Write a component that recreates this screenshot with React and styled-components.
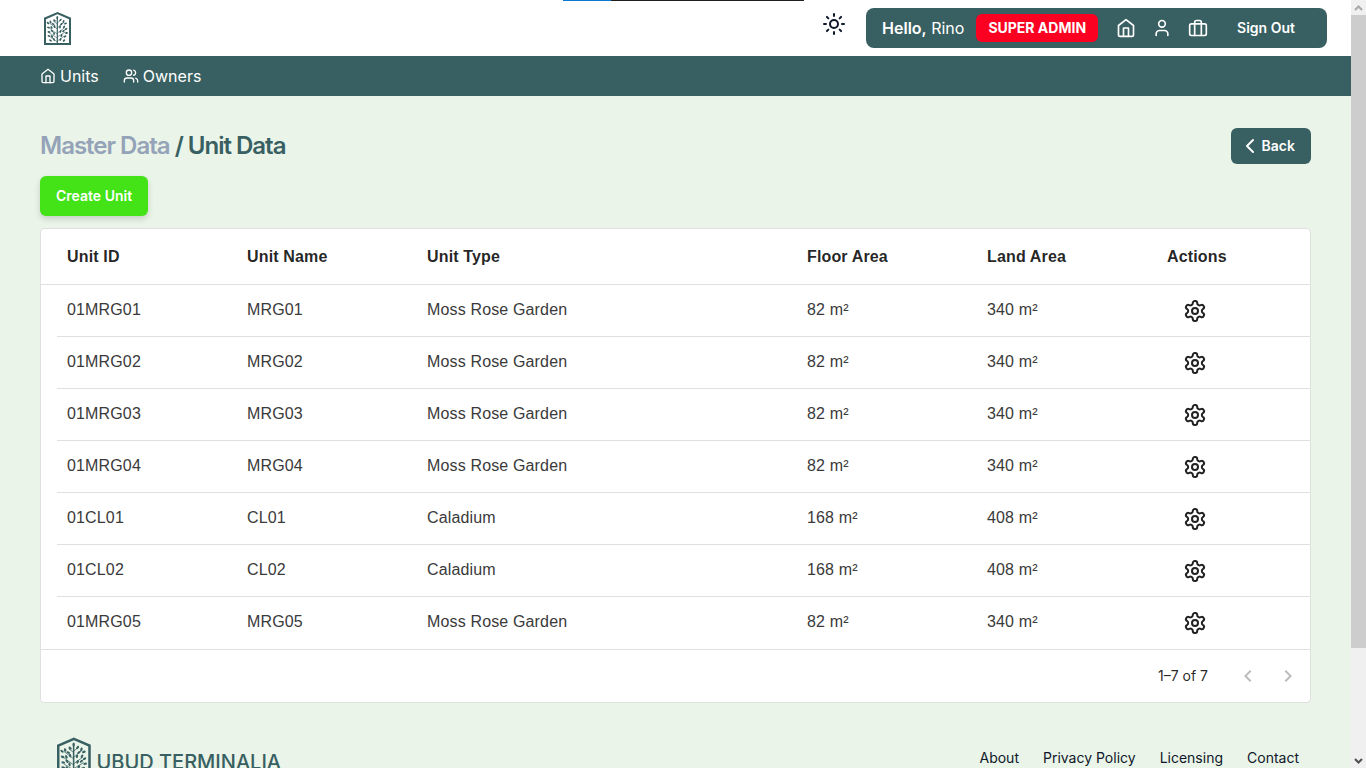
import React from "react";
import styled, { createGlobalStyle } from "styled-components";
import { Sun, ChevronLeft } from "lucide-react";

const teal = "#385f61";
const mint = "#eaf4e8";

const GlobalStyle = createGlobalStyle`
  * { box-sizing: border-box; }
  html, body { height: 100%; }
  body { margin: 0; background: ${mint}; color: #0f172a; font-family: Inter, "Liberation Sans", sans-serif; overflow: hidden; }
  #root { height: 100%; }
  button { font: inherit; color: inherit; background: none; border: 0; padding: 0; cursor: pointer; }
  a { color: inherit; text-decoration: none; }
  h1 { margin: 0; }
  svg { display: block; flex: none; }
`;

const Window = styled.div`
  position: relative;
  display: flex;
  height: 100vh;
  overflow: hidden;
`;
const Page = styled.div`
  flex: 1;
  min-width: 0;
  overflow: hidden;
`;
const TabStrip = styled.div`
  position: absolute;
  top: 0;
  left: 50%;
  margin-left: -120px;
  width: 241px;
  height: 1px;
  background: linear-gradient(to right, #0b78d0 20%, #202020 20%);
`;

const TopBar = styled.header`
  display: flex;
  align-items: center;
  justify-content: space-between;
  height: 56px;
  padding: 0 24px 0 40px;
  background: #fff;
`;
const TopRight = styled.div`
  display: flex;
  align-items: center;
  gap: 20px;
`;
const ThemeButton = styled.button`
  color: #0f172a;
  padding-bottom: 8px;
`;
const UserPanel = styled.div`
  display: flex;
  align-items: center;
  height: 40px;
  padding: 0 32px 0 16px;
  border-radius: 8px;
  background: ${teal};
  color: #fff;
  font-size: 16px;
  line-height: 24px;
`;
const Greeting = styled.span`
  b { font-weight: 600; }
`;
const RoleBadge = styled.span`
  margin: 0 18px 0 12px;
  padding: 0 12px;
  border-radius: 6px;
  background: #fb0020;
  font-size: 14px;
  font-weight: 700;
  line-height: 28px;
`;
const IconLinks = styled.nav`
  display: flex;
  gap: 16px;
  margin-right: 29px;
`;
const SignOut = styled.button`
  font-size: 14px;
  font-weight: 600;
  line-height: 20px;
`;

const SubNav = styled.nav`
  display: flex;
  align-items: center;
  gap: 24px;
  height: 40px;
  padding: 0 40px;
  background: ${teal};
  color: #fff;
  font-size: 16px;
`;
const NavLink = styled.a`
  display: flex;
  align-items: center;
  gap: 4px;
`;

const Main = styled.main`
  padding: 32px 40px 0;
`;
const TitleRow = styled.div`
  display: flex;
  align-items: center;
  justify-content: space-between;
  height: 36px;
`;
const Title = styled.h1`
  font-size: 24px;
  font-weight: 600;
  line-height: 32px;
  letter-spacing: -1px;
  color: ${teal};
  a { color: #94a3b8; }
`;
const BackButton = styled.button`
  display: flex;
  align-items: center;
  height: 36px;
  padding: 0 16px 0 7px;
  border-radius: 6px;
  background: ${teal};
  color: #fff;
  font-size: 14px;
  font-weight: 600;
  line-height: 20px;
`;
const CreateButton = styled.button`
  display: block;
  height: 40px;
  margin: 12px 0;
  padding: 0 16px;
  border-radius: 6px;
  background: #43e317;
  color: #fff;
  font-size: 14px;
  font-weight: 600;
  line-height: 20px;
  box-shadow: 0 3px 6px rgba(0, 0, 0, 0.15);
`;

const Card = styled.section`
  border: 1px solid #e0e0e0;
  border-radius: 4px;
  background: #fff;
  font-family: "Liberation Sans", Arial, sans-serif;
  color: rgba(0, 0, 0, 0.87);
`;
const Table = styled.table`
  width: 100%;
  table-layout: fixed;
  border-collapse: separate;
  border-spacing: 0;
  font-size: 16px;
  letter-spacing: 0.15px;
`;
const Col = styled.col`
  width: ${(p) => (p.$w ? `${p.$w}px` : "auto")};
`;
const Th = styled.th`
  height: 56px;
  padding: 0 10px;
  border-bottom: 1px solid #e0e0e0;
  text-align: left;
  font-weight: 700;
`;
const Td = styled.td`
  height: 52px;
  padding: 0 10px 2px;
  border-bottom: 1px solid ${(p) => (p.$plain ? "transparent" : "#e0e0e0")};
  color: #3a3a3a;
`;
const GearButton = styled.button`
  display: block;
  margin-left: 16px;
  padding-top: 3px;
  color: #212121;
`;
const Pager = styled.div`
  display: flex;
  align-items: center;
  justify-content: flex-end;
  height: 53px;
  border-top: 1px solid #e0e0e0;
  padding-right: 10px;
  font-family: Inter, sans-serif;
  font-size: 14px;
  line-height: 20px;
`;
const PagerButtons = styled.div`
  display: flex;
  gap: 16px;
  margin-left: 28px;
  color: #bdbdbd;
`;

const Footer = styled.footer`
  display: flex;
  justify-content: space-between;
  align-items: center;
  margin: 32px 12px 0;
`;
const Brand = styled.a`
  display: flex;
  align-items: center;
  gap: 2px;
  color: ${teal};
  font-size: 20px;
  font-weight: 500;
`;
const BrandName = styled.span`
  padding-top: 8px;
`;
const FooterLinks = styled.nav`
  display: flex;
  gap: 24px;
  font-size: 14px;
`;

const Scrollbar = styled.div`
  display: flex;
  flex-direction: column;
  width: 15px;
  background: #f0f0f0;
`;
const ScrollArrow = styled.div`
  display: flex;
  align-items: center;
  justify-content: center;
  height: 15px;
  color: ${(p) => (p.$off ? "#a8a8a8" : "#505050")};
`;
const ScrollTrack = styled.div`
  display: flex;
  flex-direction: column;
  flex: 1;
`;
const ScrollThumb = styled.div`
  flex: 6;
  background: #cdcdcd;
`;
const ScrollRest = styled.div`
  flex: 1;
`;

const Stroke = ({ size = 24, children }) => (
  <svg width={size} height={size} viewBox="0 0 24 24" fill="none" stroke="currentColor"
    strokeWidth="2" strokeLinecap="round" strokeLinejoin="round" aria-hidden="true">
    {children}
  </svg>
);
const HomeIcon = ({ size }) => (
  <Stroke size={size}>
    <path d="m3 9 9-7 9 7v11a2 2 0 0 1-2 2H5a2 2 0 0 1-2-2z" />
    <path d="M9 22V12h6v10" />
  </Stroke>
);
const UserIcon = ({ size }) => (
  <Stroke size={size}>
    <circle cx="12" cy="7" r="4" />
    <path d="M19 21v-2a4 4 0 0 0-4-4H9a4 4 0 0 0-4 4v2" />
  </Stroke>
);
const CaseIcon = ({ size }) => (
  <Stroke size={size}>
    <rect x="2" y="7" width="20" height="14" rx="2" />
    <path d="M16 21V5a2 2 0 0 0-2-2h-4a2 2 0 0 0-2 2v16" />
  </Stroke>
);
const OwnersIcon = ({ size }) => (
  <Stroke size={size}>
    <circle cx="9" cy="7" r="4" />
    <path d="M16 21v-2a4 4 0 0 0-4-4H6a4 4 0 0 0-4 4v2" />
    <path d="M22 21v-2a4 4 0 0 0-3-3.870M16 3.130a4 4 0 0 1 0 7.750" />
  </Stroke>
);
const GearIcon = () => (
  <Stroke>
    <path d="M12.22 2h-.44a2 2 0 0 0-2 2v.18a2 2 0 0 1-1 1.73l-.43.25a2 2 0 0 1-2 0l-.15-.08a2 2 0 0 0-2.73.73l-.22.38a2 2 0 0 0 .73 2.73l.15.1a2 2 0 0 1 1 1.72v.51a2 2 0 0 1-1 1.74l-.15.09a2 2 0 0 0-.73 2.73l.22.38a2 2 0 0 0 2.73.73l.15-.08a2 2 0 0 1 2 0l.43.25a2 2 0 0 1 1 1.73V20a2 2 0 0 0 2 2h.44a2 2 0 0 0 2-2v-.18a2 2 0 0 1 1-1.73l.43-.25a2 2 0 0 1 2 0l.15.08a2 2 0 0 0 2.73-.73l.22-.39a2 2 0 0 0-.73-2.73l-.15-.08a2 2 0 0 1-1-1.74v-.5a2 2 0 0 1 1-1.74l.15-.09a2 2 0 0 0 .73-2.73l-.22-.38a2 2 0 0 0-2.73-.73l-.15.08a2 2 0 0 1-2 0l-.43-.25a2 2 0 0 1-1-1.73V4a2 2 0 0 0-2-2z" />
    <circle cx="12" cy="12" r="3" />
  </Stroke>
);
const PageChevron = ({ right }) => (
  <svg width="24" height="24" viewBox="0 0 24 24" fill="currentColor" aria-hidden="true">
    <path d={right ? "M10 6 8.590 7.410 13.170 12l-4.580 4.590L10 18l6-6z" : "M15.410 7.410 14 6l-6 6 6 6 1.410-1.410L10.830 12z"} />
  </svg>
);

const leaves = [
  [17.3, 7.5, 90], [14.5, 10.5, 45], [20.5, 10, 130], [8, 13, 40], [10.5, 12, 70], [23.5, 11.5, 110],
  [25.5, 13.5, 160], [13, 14, 20], [21.5, 14, 140], [14.5, 16.5, 80], [20, 17, 100], [8.5, 17.5, 20],
  [11.5, 17.5, 60], [24, 17, 120], [26, 19, 150], [9, 22, 10], [12, 21, 50], [14, 23.5, 80],
  [20.5, 21.5, 110], [23.5, 21, 140], [26.5, 23, 170], [9, 26, 20], [12, 26.5, 60], [21.5, 25.5, 120],
  [25, 26.5, 150], [14, 29.5, 70], [20.5, 29.5, 110], [10.5, 30.5, 30], [24, 30.5, 140],
];
const Logo = ({ scale = 1 }) => (
  <svg width={34 * scale} height={36 * scale} viewBox="0 0 34 36" fill="none" stroke={teal} aria-hidden="true">
    <path d="M5 8.500 17.500 3 30 8.500v25.500H5z" strokeWidth="2" />
    <path d="M17.300 33V7" strokeWidth="1.200" />
    <path d="M17.300 14l-4-3M17.300 13l3.500-3M17.300 19l-8-6M17.300 18l7-6M17.300 24l-8-6M17.300 23l7-5M17.300 28l-8-5M17.300 27l8-5M17.300 32l-7-5M17.300 31l7-5" strokeWidth="0.600" />
    {leaves.map(([x, y, a]) => (
      <ellipse key={`${x}-${y}`} cx={x} cy={y} rx="1.500" ry="0.900" fill={teal} stroke="none" transform={`rotate(${a} ${x} ${y})`} />
    ))}
  </svg>
);

const columns = [
  ["Unit ID", 180], ["Unit Name", 180], ["Unit Type", 0],
  ["Floor Area", 180], ["Land Area", 180], ["Actions", 153],
];
const moss = (n) => [`01MRG0${n}`, `MRG0${n}`, "Moss Rose Garden", "82 m²", "340 m²"];
const caladium = (n) => [`01CL0${n}`, `CL0${n}`, "Caladium", "168 m²", "408 m²"];
const rows = [moss(1), moss(2), moss(3), moss(4), caladium(1), caladium(2), moss(5)];

export default function App() {
  return (
    <Window>
      <GlobalStyle />
      <Page>
        <TopBar>
          <a href="#home" aria-label="Ubud Terminalia"><Logo /></a>
          <TopRight>
            <ThemeButton aria-label="Toggle theme"><Sun size={24} strokeWidth={2} /></ThemeButton>
            <UserPanel>
              <Greeting><b>Hello,</b> Rino</Greeting>
              <RoleBadge>SUPER ADMIN</RoleBadge>
              <IconLinks>
                <a href="#home" aria-label="Home"><HomeIcon size={20} /></a>
                <a href="#profile" aria-label="Profile"><UserIcon size={20} /></a>
                <a href="#work" aria-label="Work"><CaseIcon size={20} /></a>
              </IconLinks>
              <SignOut>Sign Out</SignOut>
            </UserPanel>
          </TopRight>
        </TopBar>
        <SubNav>
          <NavLink href="#units"><HomeIcon size={16} />Units</NavLink>
          <NavLink href="#owners"><OwnersIcon size={16} />Owners</NavLink>
        </SubNav>
        <Main>
          <TitleRow>
            <Title><a href="#master">Master Data</a> / Unit Data</Title>
            <BackButton><ChevronLeft size={24} />Back</BackButton>
          </TitleRow>
          <CreateButton>Create Unit</CreateButton>
          <Card>
            <Table>
              <colgroup>
                <Col $w={16} />
                {columns.map(([name, w]) => <Col key={name} $w={w} />)}
              </colgroup>
              <thead>
                <tr>
                  <Th as="td" />
                  {columns.map(([name]) => <Th key={name} scope="col">{name}</Th>)}
                </tr>
              </thead>
              <tbody>
                {rows.map((row, i) => {
                  const last = i === rows.length - 1;
                  return (
                    <tr key={row[0]}>
                      <Td $plain />
                      {row.map((cell) => <Td key={cell} $plain={last}>{cell}</Td>)}
                      <Td $plain={last}>
                        <GearButton aria-label={`Actions for ${row[0]}`}><GearIcon /></GearButton>
                      </Td>
                    </tr>
                  );
                })}
              </tbody>
            </Table>
            <Pager>
              <span>1–7 of 7</span>
              <PagerButtons>
                <button aria-label="Previous page" disabled><PageChevron /></button>
                <button aria-label="Next page" disabled><PageChevron right /></button>
              </PagerButtons>
            </Pager>
          </Card>
          <Footer>
            <Brand href="#home"><Logo scale={1.25} /><BrandName>UBUD TERMINALIA</BrandName></Brand>
            <FooterLinks>
              <a href="#about">About</a>
              <a href="#privacy">Privacy Policy</a>
              <a href="#licensing">Licensing</a>
              <a href="#contact">Contact</a>
            </FooterLinks>
          </Footer>
        </Main>
      </Page>
      <Scrollbar aria-hidden="true">
        <ScrollArrow $off>
          <svg width="9" height="6" viewBox="0 0 9 6" fill="none" stroke="currentColor" strokeWidth="2"><path d="m1 5 3.500-3.500L8 5" /></svg>
        </ScrollArrow>
        <ScrollTrack><ScrollThumb /><ScrollRest /></ScrollTrack>
        <ScrollArrow>
          <svg width="9" height="6" viewBox="0 0 9 6" fill="none" stroke="currentColor" strokeWidth="2"><path d="m1 1 3.500 3.500L8 1" /></svg>
        </ScrollArrow>
      </Scrollbar>
      <TabStrip />
    </Window>
  );
}
